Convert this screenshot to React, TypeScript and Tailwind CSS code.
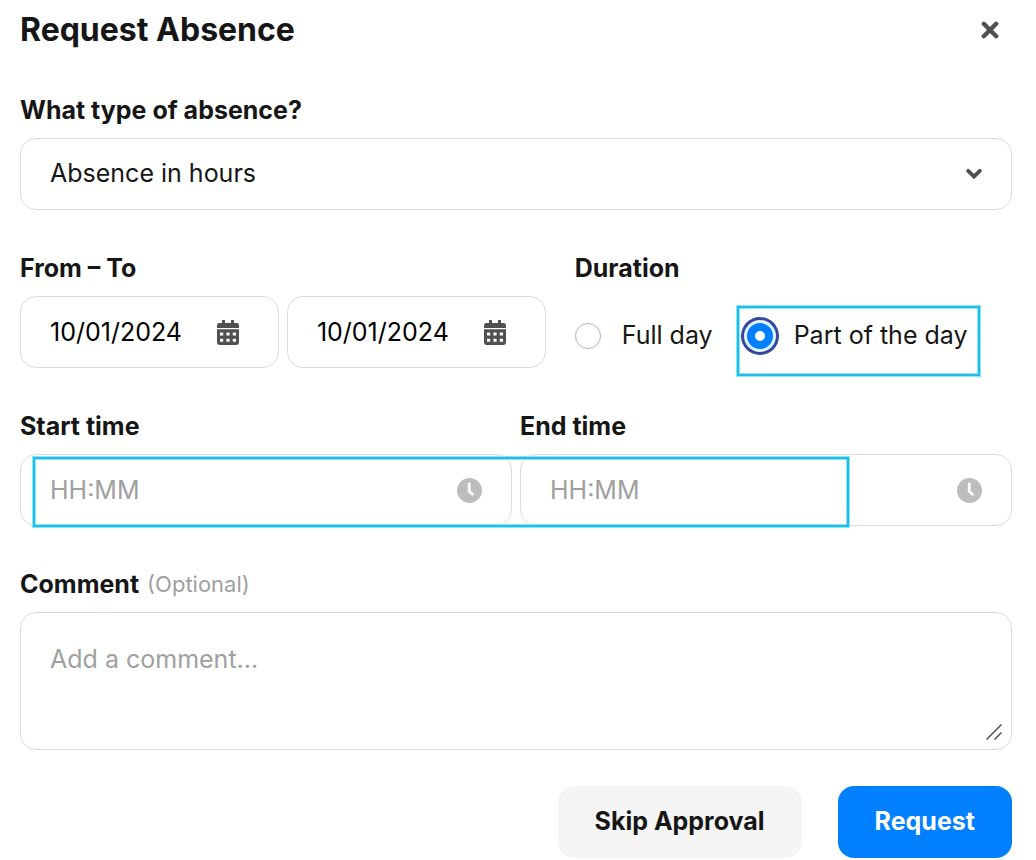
import { useState } from 'react';
import type { ReactNode } from 'react';

type Duration = 'full' | 'part';

const labelClass = 'text-[25px] leading-8 font-bold text-[#161616]';
const fieldClass =
  'flex h-[72px] items-center rounded-2xl border border-[#dcdcdc] bg-white pl-[29px]';
const inputClass =
  'h-full w-full min-w-0 flex-1 bg-transparent text-[25px] text-black outline-none placeholder:text-[#a0a0a0]';
const highlightClass =
  'pointer-events-none absolute border-2 border-[#1fbce6] shadow-[0_0_0_1px_#8be6fa,inset_0_0_0_1px_#8be6fa]';

function CalendarIcon() {
  return (
    <svg viewBox="0 0 22 25" className="h-[25px] w-[22px] shrink-0" fill="#505050" aria-hidden="true">
      <path d="M5 .6c0-.4.2-.6.6-.6h1.8c.4 0 .6.2.6.6V3h6V.6c0-.4.2-.6.6-.6h1.8c.4 0 .6.2.6.6V3h2.6A2.4 2.4 0 0 1 22 5.4V8H0V5.4A2.4 2.4 0 0 1 2.4 3H5z" />
      <path
        fillRule="evenodd"
        d="M0 9.2h22v13.4a2.4 2.4 0 0 1-2.4 2.4H2.4A2.4 2.4 0 0 1 0 22.6zM3 12.500v3h3.200v-3zM9.400 12.500v3h3.200v-3zM15.800 12.500v3H19v-3zM3 18.700v3h3.200v-3zM9.400 18.700v3h3.200v-3zM15.800 18.700v3H19v-3z"
      />
    </svg>
  );
}

function ClockIcon() {
  return (
    <svg viewBox="0 0 25 25" className="size-[25px] shrink-0" aria-hidden="true">
      <circle cx="12.5" cy="12.5" r="12.5" fill="#bdbdbd" />
      <path d="M12.200 6v7.300l3.200 2.900" fill="none" stroke="#fff" strokeWidth="2.800" strokeLinecap="round" strokeLinejoin="round" />
    </svg>
  );
}

function DateField({ label, value, onChange }: { label: string; value: string; onChange: (v: string) => void }) {
  return (
    <div className={`${fieldClass} pr-[39px]`}>
      <input
        type="text"
        aria-label={label}
        value={value}
        onChange={(e) => onChange(e.target.value)}
        className={inputClass}
      />
      <CalendarIcon />
    </div>
  );
}

function TimeField({ id, label }: { id: string; label: string }) {
  return (
    <div className="flex flex-col gap-3">
      <label htmlFor={id} className={labelClass}>{label}</label>
      <div className={`${fieldClass} pr-[29px]`}>
        <input id={id} type="text" placeholder="HH:MM" className={inputClass} />
        <ClockIcon />
      </div>
    </div>
  );
}

function DurationOption({
  checked,
  onSelect,
  children,
}: {
  checked: boolean;
  onSelect: () => void;
  children: ReactNode;
}) {
  return (
    <label className="flex h-9 cursor-pointer items-center gap-[21px] text-[25px] whitespace-nowrap text-[#161616]">
      <input
        type="radio"
        name="duration"
        checked={checked}
        onChange={onSelect}
        className="size-[26px] shrink-0 appearance-none rounded-full border border-[#b5b5b5] bg-white checked:border-8 checked:border-[#007fff] checked:shadow-[0_0_0_3px_#e3f2ff,0_0_0_6px_#33479c]"
      />
      {children}
    </label>
  );
}

export default function App() {
  const [type, setType] = useState('hours');
  const [from, setFrom] = useState('10/01/2024');
  const [to, setTo] = useState('10/01/2024');
  const [duration, setDuration] = useState<Duration>('part');

  return (
    <form
      onSubmit={(e) => e.preventDefault()}
      className="flex flex-col bg-white pt-3 pr-6 pl-5 font-['Inter',sans-serif]"
    >
      {/* Header */}
      <div className="mb-[46px] flex h-9 items-center justify-between pr-[13px]">
        <h1 className="text-[32px] leading-9 font-bold text-[#161616]">Request Absence</h1>
        <button type="button" aria-label="Close" className="cursor-pointer">
          <svg viewBox="0 0 18 18" className="size-[18px]" fill="none" stroke="#505050" strokeWidth="4.400" strokeLinecap="round" aria-hidden="true">
            <path d="M2.800 2.800l12.400 12.400M15.200 2.800L2.800 15.200" />
          </svg>
        </button>
      </div>

      <div className="flex flex-col gap-[42px]">
        {/* Absence type */}
        <div className="flex flex-col gap-3">
          <label htmlFor="type" className={labelClass}>What type of absence?</label>
          <div className="relative">
            <select
              id="type"
              value={type}
              onChange={(e) => setType(e.target.value)}
              className="block h-[72px] w-full appearance-none rounded-2xl border border-[#dcdcdc] bg-white pr-16 pl-[29px] text-[25px] text-[#161616] outline-none"
            >
              <option value="hours">Absence in hours</option>
            </select>
            <svg viewBox="0 0 16 12" className="pointer-events-none absolute top-[30px] right-[30px] h-3 w-4" fill="none" stroke="#505050" strokeWidth="3.800" strokeLinecap="round" aria-hidden="true">
              <path d="M2.200 2.800L8 8.600l5.800-5.800" />
            </svg>
          </div>
        </div>

        {/* Dates and duration */}
        <div className="flex gap-[29px]">
          <fieldset className="w-[53%]">
            <legend className={`${labelClass} mb-3`}>From – To</legend>
            <div className="grid grid-cols-2 gap-2">
              <DateField label="From" value={from} onChange={setFrom} />
              <DateField label="To" value={to} onChange={setTo} />
            </div>
          </fieldset>
          <fieldset>
            <legend className={`${labelClass} mb-3`}>Duration</legend>
            <div className="flex h-[72px] items-center gap-[34px] pt-2">
              <DurationOption checked={duration === 'full'} onSelect={() => setDuration('full')}>
                Full day
              </DurationOption>
              <div className="relative">
                <DurationOption checked={duration === 'part'} onSelect={() => setDuration('part')}>
                  Part of the day
                </DurationOption>
                <div className={`${highlightClass} -top-3 -right-3 -bottom-[22px] -left-2.5`} />
              </div>
            </div>
          </fieldset>
        </div>

        {/* Times */}
        <div className="relative grid grid-cols-2 gap-2">
          <TimeField id="start" label="Start time" />
          <TimeField id="end" label="End time" />
          <div className={`${highlightClass} -bottom-px left-[13px] h-[70px] w-[82.3%]`} />
        </div>

        {/* Comment */}
        <div className="flex flex-col gap-3">
          <label htmlFor="comment" className={`${labelClass} flex items-center gap-2`}>
            Comment
            <span className="text-[22px] leading-8 font-normal text-[#a0a0a0]">(Optional)</span>
          </label>
          <div className="relative flex">
            <textarea
              id="comment"
              placeholder="Add a comment..."
              className="h-[138px] w-full resize-none rounded-2xl border border-[#dcdcdc] bg-white px-[29px] pt-[30px] text-[25px] leading-8 text-[#161616] outline-none placeholder:text-[#a0a0a0]"
            />
            <svg viewBox="0 0 16 16" className="pointer-events-none absolute right-2.5 bottom-2.5 size-4" fill="none" stroke="#505050" strokeWidth="1.500" aria-hidden="true">
              <path d="M.500 15.500l15-15M8.500 15.500l7-7" />
            </svg>
          </div>
        </div>
      </div>

      {/* Actions */}
      <div className="mt-9 flex justify-end gap-9">
        <button type="button" className="h-[72px] cursor-pointer rounded-2xl bg-[#f5f5f5] px-[37px] text-[25px] font-bold text-[#161616]">
          Skip Approval
        </button>
        <button type="submit" className="h-[72px] cursor-pointer rounded-2xl bg-[#007fff] px-[37px] text-[25px] font-bold text-white">
          Request
        </button>
      </div>
    </form>
  );
}
